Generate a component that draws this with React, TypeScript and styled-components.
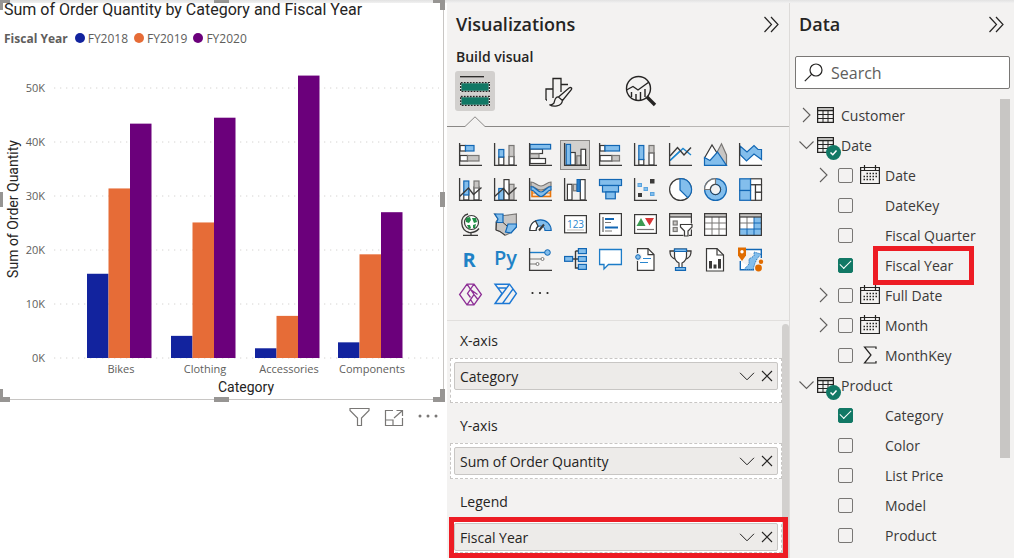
import React from "react";
import styled, { createGlobalStyle, css } from "styled-components";

const ink = "#252423";
const soft = "#605e5c";
const panel = "#f3f2f1";
const red = "#ed1c24";
const green = "#117865";

const GlobalStyle = createGlobalStyle`
  * { box-sizing: border-box; }
  body {
    margin: 0;
    background: #fff;
    color: ${ink};
    font-family: "Open Sans", "Noto Sans", sans-serif;
    font-size: 14px;
  }
  button { font: inherit; color: inherit; padding: 0; border: 0; background: none; }
  svg { display: block; }
`;

const Page = styled.div`
  position: relative;
  display: grid;
  grid-template-columns: minmax(0, 1fr) 343px 224px;
  height: 100vh;
  overflow: hidden;
`;

const TopShade = styled.div`
  position: absolute;
  inset: 0 0 auto 0;
  height: 3px;
  background: linear-gradient(#e2e2e2, #f1f1f1);
`;

/* ---------- chart ---------- */

const Canvas = styled.main`
  display: flex;
  flex-direction: column;
  padding-right: 3px;
`;

const VisualFrame = styled.section`
  position: relative;
  border: solid #c8c6c4;
  border-width: 0 1px 1px 0;
`;

const VisualTitle = styled.h1`
  margin: 0;
  padding-left: 4px;
  font: 400 16px/20px Roboto, sans-serif;
  white-space: nowrap;
`;

const Legend = styled.div`
  display: flex;
  align-items: center;
  gap: 6px;
  height: 20px;
  margin: 8px 0 2px;
  padding-left: 4px;
  color: ${soft};
  font-size: 12px;
`;

const LegendTitle = styled.strong`
  margin-right: 1px;
`;

const LegendItem = styled.span`
  display: flex;
  align-items: center;
  gap: 3px;
`;

const Dot = styled.i<{ $color: string }>`
  width: 10px;
  height: 10px;
  border-radius: 50%;
  background: ${(p) => p.$color};
`;

const Plot = styled.svg`
  width: 100%;
  height: auto;
  .tick { font: 11px "Open Sans", sans-serif; fill: ${soft}; }
  .axis { font: 14px Roboto, sans-serif; fill: ${ink}; text-anchor: middle; }
`;

const handleSpots = {
  tl: "left: 0; top: 0; width: 10px; height: 10px; border-width: 3px 0 0 3px;",
  tc: "left: calc(50% - 8px); top: 0; width: 15px; height: 3px; border-width: 3px 0 0 0;",
  tr: "right: -2px; top: 0; width: 12px; height: 10px; border-width: 3px 5px 0 0;",
  ml: "left: 0; top: 192px; width: 3px; height: 15px; border-width: 0 0 0 3px;",
  mr: "right: -2px; top: 192px; width: 5px; height: 15px; border-width: 0 5px 0 0;",
  bl: "left: 0; bottom: -3px; width: 10px; height: 13px; border-width: 0 0 5px 3px;",
  bc: "left: calc(50% - 8px); bottom: -3px; width: 15px; height: 5px; border-width: 0 0 5px 0;",
  br: "right: -2px; bottom: -3px; width: 12px; height: 13px; border-width: 0 5px 5px 0;",
};

const Handle = styled.span<{ $at: keyof typeof handleSpots }>`
  position: absolute;
  border: solid #979593;
  ${(p) => handleSpots[p.$at]}
`;

const VisualActions = styled.div`
  display: flex;
  justify-content: flex-end;
  gap: 14px;
  margin-top: 7px;
  padding-right: 6px;
`;

const series = [
  { name: "FY2018", color: "#12239e" },
  { name: "FY2019", color: "#e66c37" },
  { name: "FY2020", color: "#6b007b" },
];

const groups = [
  { name: "Bikes", x: 87, values: [15.6, 31.4, 43.4] },
  { name: "Clothing", x: 171, values: [4.1, 25.1, 44.5] },
  { name: "Accessories", x: 255, values: [1.8, 7.8, 52.3] },
  { name: "Components", x: 338, values: [2.9, 19.2, 27] },
];

function Chart() {
  return (
    <VisualFrame>
      <VisualTitle>Sum of Order Quantity by Category and Fiscal Year</VisualTitle>
      <Legend>
        <LegendTitle>Fiscal Year</LegendTitle>
        {series.map((s) => (
          <LegendItem key={s.name}>
            <Dot $color={s.color} />
            {s.name}
          </LegendItem>
        ))}
      </Legend>
      <Plot viewBox="0 50 443 349" role="img" aria-label="Order quantity by category and fiscal year">
        {[0, 10, 20, 30, 40, 50].map((v) => (
          <g key={v}>
            <line x1="54" x2="439" y1={358 - v * 5.4} y2={358 - v * 5.4} stroke="#d6d4d2" strokeDasharray="1.3 4.7" />
            <text className="tick" x="45" y={362 - v * 5.4} textAnchor="end">{v}K</text>
          </g>
        ))}
        {groups.map((g) => (
          <g key={g.name}>
            {g.values.map((v, i) => (
              <rect key={i} x={g.x + i * 21.5} y={358 - v * 5.4} width="21.5" height={v * 5.4} fill={series[i].color} />
            ))}
            <text className="tick" x={g.x + 34} y="373" textAnchor="middle">{g.name}</text>
          </g>
        ))}
        <text className="axis" x="246" y="392">Category</text>
        <text className="axis" transform="translate(18 209) rotate(-90)">Sum of Order Quantity</text>
      </Plot>
      {(Object.keys(handleSpots) as (keyof typeof handleSpots)[]).map((k) => (
        <Handle key={k} $at={k} />
      ))}
    </VisualFrame>
  );
}

/* ---------- visual gallery drawings ---------- */

const D = "#3b3a39";
const B = "#1267b4";
const Bf = "#83beec";
const G = "#797775";
const Gf = "#c8c6c4";
const W = "#fff";

type BoxProps = { x: number; y: number; w: number; h: number; t?: "b" | "g" | "w" | "d" };
const tones = { b: [Bf, B], g: [Gf, G], w: [W, D], d: [Gf, D] };
const R = ({ x, y, w, h, t = "w" }: BoxProps) => (
  <rect x={x} y={y} width={w} height={h} fill={tones[t][0]} stroke={tones[t][1]} strokeWidth="1.2" />
);
const Axis = () => <path d="M.6 0V22.4H23" fill="none" stroke={D} strokeWidth="1.3" />;
const L = ({ d, c = D, f = "none", w = 1.2 }: { d: string; c?: string; f?: string; w?: number }) => (
  <path d={d} fill={f} stroke={c} strokeWidth={w} />
);

const visuals: [string, React.ReactNode][] = [
  ["Stacked bar chart", <><R x={1} y={2.5} w={5.5} h={5.5} /><R x={6.5} y={2.5} w={8.5} h={5.5} t="b" /><R x={1} y={12.5} w={7.5} h={5.5} /><R x={8.5} y={12.5} w={11.5} h={5.5} t="g" /><Axis /></>],
  ["Stacked column chart", <><R x={4.8} y={14} w={5} h={8} /><R x={4.8} y={6.5} w={5} h={7.5} t="b" /><R x={15} y={13.5} w={5} h={8.5} /><R x={15} y={2.5} w={5} h={11} t="g" /><Axis /></>],
  ["Clustered bar chart", <><R x={1} y={6} w={12.5} h={4.5} /><R x={1} y={10.8} w={9} h={4.7} t="g" /><R x={1} y={15.5} w={15.5} h={5} /><R x={1} y={1.4} w={20.6} h={4.6} t="b" /><Axis /></>],
  ["Clustered column chart", <><R x={6.5} y={9.5} w={4.7} h={12.5} /><R x={12.8} y={12.8} w={4.2} h={9.2} t="g" /><R x={17} y={6.3} w={4.6} h={15.7} /><R x={2.2} y={1.4} w={4.3} h={20.6} t="b" /><Axis /></>],
  ["100% stacked bar chart", <><R x={1} y={2.5} w={5} h={5.5} /><R x={6} y={2.5} w={14.5} h={5.5} t="b" /><R x={1} y={12.5} w={12} h={5.5} /><R x={13} y={12.5} w={7.5} h={5.5} t="g" /><Axis /></>],
  ["100% stacked column chart", <><R x={4.8} y={16.5} w={5} h={5.5} /><R x={4.8} y={2.5} w={5} h={14} t="b" /><R x={15} y={9.8} w={5} h={12.2} /><R x={15} y={2.5} w={5} h={7.3} t="g" /><Axis /></>],
  ["Line chart", <><L d="M1 17.5L14 5.5L22 12" c="#1c86cf" w={1.4} /><L d="M1 13L8.5 4.5L15 12L22 4.5" w={1.4} /><L d="M1 17.5L10.5 8.5" c="#1c86cf" w={1.4} /><Axis /></>],
  ["Area chart", <><L d="M9 17L17.5 .8L22.5 12V22H9Z" f={Gf} c={G} /><L d="M.5 15L8 2L15.5 14L8 20Z" f={W} /><L d="M.5 14.5L6 17.5L13.5 9L22.5 22.4H.5Z" f={Bf} c={B} /></>],
  ["Stacked area chart", <><L d="M1 11.5L7.5 17.5L15 11L22.5 16.5V22H1Z" f={W} c={W} /><L d="M1 3L8 9L15 2.5L19 6.5H22.5V16.5L15 11L7.5 18L1 11.5Z" f={Bf} c={B} /><Axis /></>],
  ["Line and stacked column chart", <><R x={4.8} y={13} w={5} h={9} /><R x={4.8} y={3} w={5} h={14} t="b" /><R x={15} y={9} w={5} h={13} /><R x={15} y={3} w={5} h={7} t="g" /><L d="M.6 18.5L9.5 10L14.5 16.5L22.5 9.5" w={1.4} /><Axis /></>],
  ["Line and clustered column chart", <><R x={4.8} y={10.5} w={5} h={11.5} t="b" /><R x={15} y={6.3} w={5} h={15.7} t="g" /><R x={10} y={1.6} w={5} h={20.4} /><L d="M.6 18.5L9.5 10.5L14.5 16.5L22.5 9.5" w={1.4} /><Axis /></>],
  ["Ribbon chart", <><rect x="3" y="11.5" width="18.5" height="7" fill="#fbe3cc" stroke="#e8750c" strokeWidth="1.6" /><path d="M3 15H21.5" stroke="#e8750c" /><L d="M2 4C6 4 8 8 12 8S18 4 22 4V8C18 8.5 17 12 12 12S6 8.5 2 8Z" f={Gf} c={G} /><L d="M2 8.5C7 8.5 8 14 12 14S17 8.5 22 8.5V12C18 12 16 18.5 12 18.5S6 12 2 12Z" f={Bf} c={B} /><Axis /></>],
  ["Waterfall chart", <><R x={3.4} y={6.3} w={4.6} h={15.7} /><R x={9.3} y={6.3} w={3.6} h={6.5} t="g" /><R x={16.3} y={1.6} w={4.8} h={20.4} /><rect x="13" y="1.5" width="3" height="12" fill="#2a7fc9" stroke={B} /><Axis /></>],
  ["Funnel chart", <><R x={0.5} y={1.5} w={22} h={6} t="b" /><R x={3.5} y={7.5} w={16} h={6.5} t="b" /><R x={6.8} y={14} w={9.5} h={6.8} t="b" /></>],
  ["Scatter chart", <><rect x="16" y="1" width="4.5" height="4.5" fill={D} /><rect x="4" y="15" width="4" height="4" fill={D} />{[[4, 5.5], [10, 9.5], [16.5, 14.5]].map(([x, y]) => <rect key={x} x={x} y={y} width="3.5" height="3" fill={Bf} stroke="#5aa3de" />)}<Axis /></>],
  ["Pie chart", <><circle cx="11.5" cy="11.5" r="10.9" fill={W} stroke={D} strokeWidth="1.2" /><L d="M11 .6A10.9 10.9 0 0 1 18.8 19.6L11 12Z" f={Bf} c={B} /></>],
  ["Donut chart", <><circle cx="11.5" cy="11.5" r="8" fill="none" stroke={B} strokeWidth="7" /><circle cx="11.5" cy="11.5" r="8" fill="none" stroke={Bf} strokeWidth="4.6" /><L d="M.6 11.5A10.9 10.9 0 0 1 11.5 .6V6.2A5.3 5.3 0 0 0 6.2 11.5Z" f={W} c={G} /><circle cx="11.5" cy="11.5" r="5.2" fill="none" stroke={D} strokeWidth=".8" /></>],
  ["Treemap", <><R x={11.5} y={0.8} w={11} h={6} /><R x={11.5} y={6.8} w={5} h={15.5} /><R x={16.5} y={6.8} w={6} h={7.5} /><R x={16.5} y={14.3} w={6} h={8} /><R x={0.7} y={0.8} w={10.8} h={11.7} t="b" /><R x={0.7} y={12.5} w={10.8} h={9.8} t="b" /></>],
  ["Map", <><circle cx="12.5" cy="9.5" r="7" fill={W} stroke={D} strokeWidth="1.2" /><path d="M7 5l4-1 1 3-2 3-3-1zM13 5l4 0 1 4-3 1zM8 12l3 0 1 3-2 1zM14 12l3-1-1 4-2 0z" fill="#1f8f45" /><L d="M9 1C0 3 1 17 10 19.5C15 20 18 18 20 15.5M12 19.5V22M4 22.3H19" w={1.3} /></>],
  ["Filled map", <><L d="M.6 1L10 2.5L22.4 1V14L15 20.5L11 22.4L6 18.5L2 17V9L4 6Z" f={Gf} c={G} /><L d="M.8 1H9V9.5L2.5 9.5L4 6Z" f={Bf} c={B} /><L d="M14 11H22.4V14L17 20L11.5 19Z" f={Bf} c={B} /><L d="M9 9.5L13 13M2.5 9.5L2 17L6 18.5L11 22" w={1} /></>],
  ["Gauge", <><L d="M.8 17.5A10.7 10.7 0 0 1 22.2 17.5H16A4.5 4.5 0 0 0 7 17.5Z" f={Bf} c={B} /><L d="M.8 17.5C1 12 4 9 6.5 8L9 13C8 14 7 15.5 7 17.5Z" f={W} /><L d="M10 17.5L15 11.5" w={2} /></>],
  ["Card", <><R x={0.6} y={2.6} w={21.8} h={17.2} /><text x="11.5" y="14.5" fontSize="10" textAnchor="middle" fill="#2a86ce" fontFamily="Open Sans">123</text><L d="M3 17H20" c={Gf} /></>],
  ["Multi-row card", <><R x={0.6} y={0.6} w={21.8} h={21.8} /><L d="M4 4V19" c={D} w={1} /><L d="M6 6H15M6 14.5H19" c={B} w={2} /><L d="M6 9.5H12M6 18H13" c={G} w={1} /></>],
  ["KPI", <><R x={0.6} y={1.6} w={21.8} h={18.8} /><path d="M2.5 13H11.5L7 5Z" fill="#3d9b52" /><path d="M11 5H20L15.5 12.5Z" fill="#d93636" /><L d="M3 16.5H20" c={G} /></>],
  ["Slicer", <><R x={0.6} y={0.6} w={21.8} h={21.8} /><R x={0.6} y={0.6} w={21.8} h={3.4} t="d" /><R x={4.2} y={8} w={4} h={4} t="g" /><R x={4.2} y={14.5} w={4} h={4} t="g" /><path d="M10.5 10.5H24V15L20 19V24H14.5V19L10.5 15Z" fill={panel} /><L d="M11.5 11.5H23V14L19 18V23H15.5V18L11.5 14Z" f={W} /></>],
  ["Table", <><R x={0.6} y={0.6} w={21.8} h={21.8} /><L d="M1 10H22M1 16H22M8 4V22M15 4V22" c={G} w={1} /><R x={0.6} y={0.6} w={21.8} h={3.4} t="d" /></>],
  ["Matrix", <><R x={0.6} y={0.6} w={21.8} h={21.8} /><path d="M15 4H22V22H1V16H15Z" fill={Bf} /><L d="M1 10H15M8 4V16" c={G} w={1} /><L d="M15 4V22M1 16H22M15 10H22M8 16V22" c={B} w={1} /><L d="M.6 4V22.4H22.4V4" /><R x={0.6} y={0.6} w={21.8} h={3.4} t="d" /></>],
  ["R script visual", <text x="10" y="19" fontSize="20" fontWeight="700" textAnchor="middle" fill="#1f82c6" fontFamily="Open Sans">R</text>],
  ["Python visual", <text x="11.5" y="17" fontSize="20" fontWeight="600" textAnchor="middle" fill="#1f82c6" fontFamily="Open Sans">Py</text>],
  ["Key influencers", <><L d="M1 4.5H16" c="#1c7cc8" w={1.4} /><circle cx="18.5" cy="4.5" r="2.8" fill={Bf} stroke={B} /><L d="M1 11H12M1 16H7" c={G} /><circle cx="13.5" cy="11" r="1.5" fill={W} stroke={G} /><circle cx="8.5" cy="16" r="1.5" fill={W} stroke={G} /><Axis /></>],
  ["Decomposition tree", <><L d="M8 11H14M11.5 3V20H14M11.5 3H14" w={1.4} /><R x={0.6} y={8.5} w={8} h={4.8} t="b" /><R x={14.4} y={0.6} w={8} h={5} t="b" /><R x={14.4} y={8.5} w={8} h={5} t="b" /><R x={14.4} y={16.4} w={8} h={5} t="b" /></>],
  ["Q&A", <L d="M.6 1.5H22.4V16.5H9.5L5 21V16.5H.6Z" f={W} c="#1c7cc8" w={1.3} />],
  ["Smart narrative", <><L d="M3.5 .6H14L20 6.6V22.4H3.5Z" f={W} /><L d="M14 .6V6.6H20" /><circle cx="4" cy="9" r="4" fill={panel} /><circle cx="4" cy="9" r="2.3" fill={Bf} stroke={B} /><L d="M9 10.5H17M6 14.5H14" c="#2a86ce" /></>],
  ["Goals", <><L d="M5 3H1C.8 7 3 10.5 7 11M18 3H22C22.2 7 20 10.5 16 11" w={1.3} /><L d="M5.5 1H17.5V8C17.5 12 15 14 13 15V20H10V15C8 14 5.5 12 5.5 8Z" f={W} /><L d="M5.5 1H17.5V3.5H5.5ZM6.5 19.5H16.5V22.4H6.5Z" f={Bf} c={B} /></>],
  ["Paginated report", <><L d="M2.5 .6H13L19.5 7V23H2.5Z" f={W} /><L d="M13 .6V7H19.5" /><path d="M5 13h3v7.5H5zM9.5 16.5h3v4h-3zM14 11h3v9.5h-3z" fill={D} /></>],
  ["ArcGIS map", <><L d="M5 1.5H22.3V10M1.3 13V21.7H15" c={B} f={W} w={1.4} /><path d="M5 21.5L10 16V11L15 8V4L22 6L18 11L16 15L14 21.5Z" fill={Bf} stroke={B} strokeDasharray="1 1" /><path d="M-1-.5H7V7.5L3 13L-1 7.5Z" fill="#e06c00" /><circle cx="3" cy="3.8" r="1.7" fill={W} /><circle cx="19.5" cy="20" r="3.4" fill="#e06c00" /><circle cx="22" cy="13.8" r="2.2" fill="#e06c00" /></>],
  ["Power Apps", <L d="M8 1.2H15L22.4 11.5L15 21.8H8L.6 11.5ZM8 1.2L15 11.5L8 21.8M15 1.2L8.5 10.5L11.5 14.5M11.5 6.5L18.5 11.5M15 21.8L11.5 16.5L15 11.5L18.5 16" c="#8d2f96" w={1.3} />],
  ["Power Automate", <L d="M1 1.2H15.5L22.4 10.5L15.5 20.5H1L8 10.5ZM15.5 1.2L1 20.5M19 6L8.5 20.5M3.5 5H12" c="#1c78d4" w={1.4} />],
  ["More visuals", <g fill={ink}><circle cx="3.5" cy="10" r="1.1" /><circle cx="11" cy="10" r="1.1" /><circle cx="18.5" cy="10" r="1.1" /></g>],
];

/* ---------- visualizations panel ---------- */

const Panel = styled.aside`
  display: flex;
  flex-direction: column;
  min-width: 0;
  background: ${panel};
`;

const VizPanel = styled(Panel)`
  border-right: 1px solid #dddbd9;
`;

const PanelHead = styled.header`
  display: flex;
  align-items: center;
  justify-content: space-between;
  height: 44px;
  padding: 4px 9px 0 9px;
`;

const PanelTitle = styled.h2`
  margin: 0;
  font-size: 18px;
  font-weight: 600;
`;

const SubTitle = styled.h3`
  margin: 4px 0 5px 9px;
  font-size: 14px;
  line-height: 18px;
  font-weight: 600;
`;

const Tabs = styled.div`
  display: flex;
  gap: 43px;
  padding-left: 8px;
`;

const Tab = styled.button<{ $on?: boolean }>`
  display: grid;
  place-items: center;
  width: 40px;
  height: 40px;
  border-radius: 3px;
  background: ${(p) => (p.$on ? "#d2d0ce" : "transparent")};
`;

const Rail = styled.div`
  display: flex;
  height: 11px;
  margin: 5px 0 13px;
`;

const RailLine = styled.span<{ $w?: number; $faint?: boolean }>`
  ${(p) => (p.$w ? css`width: ${p.$w}px;` : css`flex: 1;`)}
  border-bottom: 1px solid ${(p) => (p.$faint ? "#b8b6b4" : "#8a8886")};
`;

const Gallery = styled.div`
  display: grid;
  grid-template-columns: repeat(9, 30px);
  gap: 5px;
  padding: 0 0 10px 8px;
`;

const VisualButton = styled.button<{ $on?: boolean }>`
  display: grid;
  place-items: center;
  width: 30px;
  height: 30px;
  border: 1px solid ${(p) => (p.$on ? "#8a8886" : "transparent")};
  background: ${(p) => (p.$on ? "#d2d0ce" : "transparent")};
  svg { overflow: visible; }
`;

const Wells = styled.div`
  position: relative;
  flex: 1;
  padding: 5px 7px 0 3px;
  border-top: 1px solid #e1dfdd;
`;

const WellScroll = styled.div`
  position: absolute;
  inset: 3px 0 0 auto;
  width: 7px;
  border-radius: 4px 4px 0 0;
  background: #d2d0ce;
`;

const WellLabel = styled.h4`
  margin: 0;
  padding: 0 0 2px 10px;
  font-size: 14px;
  font-weight: 400;
  line-height: 30px;
`;

const Well = styled.div<{ $h: number }>`
  position: relative;
  height: ${(p) => p.$h}px;
  margin-bottom: 8px;
  padding: 3px;
  border: 1px dashed #c8c6c4;
  background: #fff;
`;

const Chip = styled.div`
  display: flex;
  align-items: center;
  height: 28px;
  padding-left: 5px;
  border: 1px solid #c8c6c4;
  border-radius: 2px;
  background: #edebe9;
  white-space: nowrap;
`;

const ChipName = styled.span`
  flex: 1;
`;

const ChipButton = styled.button`
  display: grid;
  place-items: center;
  width: 20px;
  height: 20px;
`;

const WellMark = styled.span`
  position: absolute;
  z-index: 1;
  inset: -3px -7px -6px -2px;
  border: 5px solid ${red};
`;

const wells = [
  { label: "X-axis", field: "Category", h: 45 },
  { label: "Y-axis", field: "Sum of Order Quantity", h: 36 },
  { label: "Legend", field: "Fiscal Year", h: 34, marked: true },
];

const Collapse = () => (
  <button aria-label="Collapse pane">
    <svg width="17" height="17" viewBox="0 0 17 17" fill="none" stroke={ink} strokeWidth="1.2">
      <path d="M1.5 1L8.5 8.5L1.5 16M8 1L15 8.5L8 16" />
    </svg>
  </button>
);

function Visualizations() {
  return (
    <VizPanel>
      <PanelHead>
        <PanelTitle>Visualizations</PanelTitle>
        <Collapse />
      </PanelHead>
      <SubTitle>Build visual</SubTitle>
      <Tabs>
        <Tab $on aria-label="Build visual">
          <svg width="32" height="32" viewBox="0 0 32 32">
            <path d="M1 1.7H25" stroke={ink} strokeWidth="1.3" />
            <path d="M1.7 7.7H30.3V16.3H1.7ZM1.7 21.5H30.3V30.3H1.7Z" fill={green} stroke={W} strokeWidth="1.3" />
            <path d="M1.7 7.7H30.3V16.3H1.7ZM1.7 21.5H30.3V30.3H1.7Z" fill="none" stroke={ink} strokeWidth="1.3" strokeDasharray="2 1" />
          </svg>
        </Tab>
        <Tab aria-label="Format visual">
          <svg width="32" height="32" viewBox="-1 0 32 32" fill="none" stroke={ink} strokeWidth="1.3">
            <path d="M3 25V14H10M10 23V3.5H18V17M18 9.5H25M3 25H4" />
            <path d="M15.5 22L26 13C28 11.8 29.3 13 28.3 14.7L19.5 25.5M15.5 22C12 21.5 12 25 11 28C9.5 29.8 8 30 6.5 29.7C10 32 18.5 32 19.5 25.5L15.5 22Z" fill={panel} />
          </svg>
        </Tab>
        <Tab aria-label="Analytics">
          <svg width="32" height="32" viewBox="0 0 32 32" fill="none" stroke={ink} strokeWidth="1.4">
            <circle cx="13.5" cy="13.5" r="12" />
            <path d="M1.5 15L8 11.5L13 15L24 7M6.5 17V22M11 19V25M15.5 17V25M20 14V22" />
            <path d="M22 22L30 30" strokeWidth="3.4" />
          </svg>
        </Tab>
      </Tabs>
      <Rail>
        <RailLine $w={17} />
        <svg width="22" height="11" viewBox="0 0 22 11" fill="none" stroke="#8a8886">
          <path d="M0 10.5H1L11 .8L21 10.5H22" />
        </svg>
        <RailLine $w={184} />
        <RailLine $faint />
      </Rail>
      <Gallery>
        {visuals.map(([name, art], i) => (
          <VisualButton key={name} $on={i === 3} aria-label={name}>
            <svg width="24" height="24" viewBox="-1 0 24 24">{art}</svg>
          </VisualButton>
        ))}
      </Gallery>
      <Wells>
        <WellScroll />
        {wells.map((w) => (
          <section key={w.label}>
            <WellLabel>{w.label}</WellLabel>
            <Well $h={w.h}>
              <Chip>
                <ChipName>{w.field}</ChipName>
                <ChipButton aria-label={`${w.field} options`}>
                  <svg width="16" height="9" viewBox="0 0 16 9" fill="none" stroke={ink}>
                    <path d="M1 .8L8 7.8L15 .8" />
                  </svg>
                </ChipButton>
                <ChipButton aria-label={`Remove ${w.field}`}>
                  <svg width="12" height="12" viewBox="0 0 12 12" fill="none" stroke={ink} strokeWidth="1.1">
                    <path d="M1 1L11 11M11 1L1 11" />
                  </svg>
                </ChipButton>
              </Chip>
              {w.marked && <WellMark />}
            </Well>
          </section>
        ))}
      </Wells>
    </VizPanel>
  );
}

/* ---------- data panel ---------- */

const SearchBox = styled.label`
  display: flex;
  align-items: center;
  gap: 8px;
  height: 33px;
  margin: 12px 4px 11px 5px;
  padding-left: 8px;
  border: 1px solid #797775;
  border-radius: 2px;
  background: #fff;
`;

const SearchInput = styled.input`
  flex: 1;
  min-width: 0;
  padding: 0;
  border: 0;
  outline: 0;
  background: none;
  font: 16px "Open Sans", sans-serif;
  &::placeholder { color: ${soft}; opacity: 1; }
`;

const Tree = styled.div`
  position: relative;
`;

const TreeScroll = styled.div`
  position: absolute;
  top: -1px;
  right: 4px;
  width: 10px;
  height: 359px;
  background: #c8c6c4;
`;

const Row = styled.div<{ $child?: boolean }>`
  display: flex;
  align-items: center;
  height: 30px;
  padding-left: ${(p) => (p.$child ? 24 : 7)}px;
  color: #3b3a39;
  white-space: nowrap;
`;

const Twisty = styled.button`
  display: grid;
  place-items: center;
  width: 20px;
  height: 20px;
`;

const TableMark = styled.span`
  position: relative;
  width: 24px;
`;

const Badge = styled.svg`
  position: absolute;
  left: 9px;
  top: 8px;
`;

const Field = styled.label`
  display: flex;
  align-items: center;
`;

const Check = styled.input`
  appearance: none;
  display: grid;
  place-items: center;
  width: 15px;
  height: 15px;
  margin: 0 7px 0 4px;
  border: 1px solid #797775;
  border-radius: 2px;
  background: ${panel};
  &:checked { border-color: ${green}; background: ${green}; }
  &:checked::after {
    content: "";
    width: 10px;
    height: 5px;
    border: solid #fff;
    border-width: 0 0 1px 1px;
    transform: translateY(-2px) rotate(-45deg);
  }
`;

const IconSlot = styled.span`
  display: grid;
  place-items: center;
  width: 20px;
  margin-right: 5px;
`;

const FieldName = styled.span`
  position: relative;
`;

const FieldMark = styled.span`
  position: absolute;
  inset: -10px -21px -10px -12px;
  border: 5px solid ${red};
`;

const Arrow = ({ open }: { open?: boolean }) => (
  <svg width="16" height="16" viewBox="0 0 16 16" fill="none" stroke={soft} strokeWidth="1.1">
    <path d={open ? "M.5 4.5L7.5 11.5L14.5 4.5" : "M4 1L11 8L4 15"} />
  </svg>
);

const Calendar = () => (
  <svg width="20" height="20" viewBox="0 0 20 20" fill="none" stroke={ink}>
    <path d="M.6 2.5H19.4V18.5H.6ZM.6 5.5H19.4M4.5 0V5M15.5 0V5" strokeWidth="1.2" />
    <path d="M6.5 8.5H17M3.5 11.5H17M3.5 14.5H14" strokeWidth="1.5" strokeDasharray="1.5 1.5" />
  </svg>
);

const Sigma = () => (
  <svg width="15" height="18" viewBox="0 0 15 18" fill="none" stroke={ink} strokeWidth="1.2">
    <path d="M13 3V1H1.5L8 9L1.5 17H13V15" />
  </svg>
);

type FieldRow = { name: string; on?: boolean; icon?: "cal" | "sum"; marked?: boolean };
const tables: { name: string; fields?: FieldRow[] }[] = [
  { name: "Customer" },
  {
    name: "Date",
    fields: [
      { name: "Date", icon: "cal" },
      { name: "DateKey" },
      { name: "Fiscal Quarter" },
      { name: "Fiscal Year", on: true, marked: true },
      { name: "Full Date", icon: "cal" },
      { name: "Month", icon: "cal" },
      { name: "MonthKey", icon: "sum" },
    ],
  },
  {
    name: "Product",
    fields: [
      { name: "Category", on: true },
      { name: "Color" },
      { name: "List Price" },
      { name: "Model" },
      { name: "Product" },
    ],
  },
];

const TwistySpace = styled.span`
  width: 20px;
`;

function DataPanel() {
  return (
    <Panel>
      <PanelHead>
        <PanelTitle>Data</PanelTitle>
        <Collapse />
      </PanelHead>
      <SearchBox>
        <svg width="19" height="19" viewBox="0 0 19 19" fill="none" stroke={ink} strokeWidth="1.2">
          <circle cx="12" cy="7" r="6" />
          <path d="M7.8 11.2L.8 18.2" />
        </svg>
        <SearchInput type="search" placeholder="Search" aria-label="Search" />
      </SearchBox>
      <Tree>
        {tables.map((t) => (
          <React.Fragment key={t.name}>
            <Row>
              <Twisty aria-label={`Toggle ${t.name}`}><Arrow open={!!t.fields} /></Twisty>
              <TableMark>
                <svg width="17" height="16" viewBox="0 0 17 16" fill="none" stroke={ink}>
                  <path d="M.6 .6H16.4V15.4H.6ZM.6 3.5H16.4" strokeWidth="1.3" />
                  <path d="M.6 7.5H16.4M.6 11.5H16.4M6 3.5V15.4M11 3.5V15.4" />
                </svg>
                {t.fields && (
                  <Badge width="15" height="15" viewBox="0 0 15 15">
                    <circle cx="7.5" cy="7.5" r="7.5" fill={green} />
                    <path d="M4.5 7.5L6.8 9.7L10.5 5.5" fill="none" stroke={W} strokeWidth="1.5" />
                  </Badge>
                )}
              </TableMark>
              <span>{t.name}</span>
            </Row>
            {t.fields?.map((f) => (
              <Row $child key={f.name}>
                {f.icon === "cal" ? <Twisty aria-label={`Toggle ${f.name}`}><Arrow /></Twisty> : <TwistySpace />}
                <Field>
                  <Check type="checkbox" defaultChecked={f.on} />
                  <IconSlot>
                    {f.icon === "cal" && <Calendar />}
                    {f.icon === "sum" && <Sigma />}
                  </IconSlot>
                  <FieldName>
                    {f.name}
                    {f.marked && <FieldMark />}
                  </FieldName>
                </Field>
              </Row>
            ))}
          </React.Fragment>
        ))}
        <TreeScroll />
      </Tree>
    </Panel>
  );
}

export default function App() {
  return (
    <>
      <GlobalStyle />
      <Page>
        <TopShade />
        <Canvas>
          <Chart />
          <VisualActions>
            <button aria-label="Filters">
              <svg width="21" height="20" viewBox="0 0 21 20" fill="none" stroke="#797775" strokeWidth="1.2">
                <path d="M1 1.5H20V3.5L12.5 11V18.5H8.5V11L1 3.5Z" />
              </svg>
            </button>
            <button aria-label="Focus mode">
              <svg width="20" height="20" viewBox="0 0 20 20" fill="none" stroke="#797775" strokeWidth="1.2">
                <path d="M9 3.5H1.5V18.5H18.5V11M1.5 13H9V18.5M10 11L18 4M12.5 3.5H18.5V9" />
              </svg>
            </button>
            <button aria-label="More options">
              <svg width="20" height="20" viewBox="0 0 20 20" fill="#797775">
                <circle cx="2" cy="9" r="1.5" /><circle cx="10" cy="9" r="1.5" /><circle cx="18" cy="9" r="1.5" />
              </svg>
            </button>
          </VisualActions>
        </Canvas>
        <Visualizations />
        <DataPanel />
      </Page>
    </>
  );
}
